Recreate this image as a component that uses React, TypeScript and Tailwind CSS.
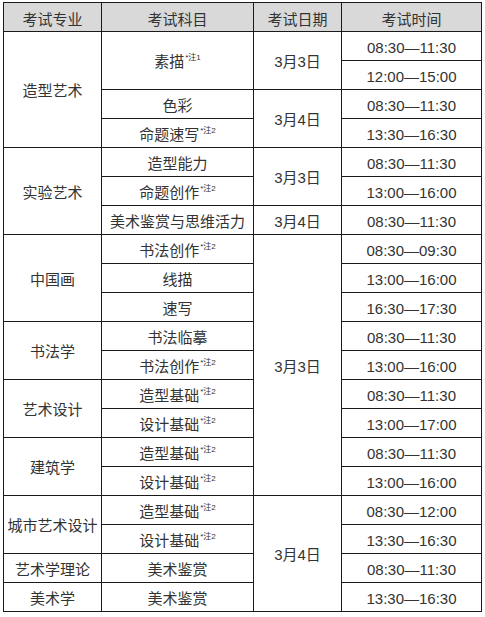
import React from "react";

type Cell = { t: string; rs?: number; note?: string };
type Row = Cell[];

const n2 = "*注2";

const rows: Row[] = [
  [{ t: "造型艺术", rs: 4 }, { t: "素描", rs: 2, note: "*注1" }, { t: "3月3日", rs: 2 }, { t: "08:30—11:30" }],
  [{ t: "12:00—15:00" }],
  [{ t: "色彩" }, { t: "3月4日", rs: 2 }, { t: "08:30—11:30" }],
  [{ t: "命题速写", note: n2 }, { t: "13:30—16:30" }],
  [{ t: "实验艺术", rs: 3 }, { t: "造型能力" }, { t: "3月3日", rs: 2 }, { t: "08:30—11:30" }],
  [{ t: "命题创作", note: n2 }, { t: "13:00—16:00" }],
  [{ t: "美术鉴赏与思维活力" }, { t: "3月4日" }, { t: "08:30—11:30" }],
  [{ t: "中国画", rs: 3 }, { t: "书法创作", note: n2 }, { t: "3月3日", rs: 9 }, { t: "08:30—09:30" }],
  [{ t: "线描" }, { t: "13:00—16:00" }],
  [{ t: "速写" }, { t: "16:30—17:30" }],
  [{ t: "书法学", rs: 2 }, { t: "书法临摹" }, { t: "08:30—11:30" }],
  [{ t: "书法创作", note: n2 }, { t: "13:00—16:00" }],
  [{ t: "艺术设计", rs: 2 }, { t: "造型基础", note: n2 }, { t: "08:30—11:30" }],
  [{ t: "设计基础", note: n2 }, { t: "13:00—17:00" }],
  [{ t: "建筑学", rs: 2 }, { t: "造型基础", note: n2 }, { t: "08:30—11:30" }],
  [{ t: "设计基础", note: n2 }, { t: "13:00—16:00" }],
  [{ t: "城市艺术设计", rs: 2 }, { t: "造型基础", note: n2 }, { t: "3月4日", rs: 4 }, { t: "08:30—12:00" }],
  [{ t: "设计基础", note: n2 }, { t: "13:30—16:30" }],
  [{ t: "艺术学理论" }, { t: "美术鉴赏" }, { t: "08:30—11:30" }],
  [{ t: "美术学" }, { t: "美术鉴赏" }, { t: "13:30—16:30" }],
];

const headers = ["考试专业", "考试科目", "考试日期", "考试时间"];

export default function App() {
  return (
    <div className="w-[485px] h-[617px] bg-white pt-[2px] pl-[3px]">
      <table
        className="table-fixed border-collapse border border-[#1a1a1a] text-[#333333] text-[15px] leading-none"
        style={{ width: 478 }}
      >
        <colgroup>
          <col className="w-[98px]" />
          <col className="w-[152px]" />
          <col className="w-[88px]" />
          <col className="w-[140px]" />
        </colgroup>
        <thead>
          <tr className="bg-[#d9d9d9]">
            {headers.map((h) => (
              <th
                key={h}
                className="h-[29px] p-0 pt-[2px] border border-[#1a1a1a] font-normal text-center align-middle [font-family:'Noto_Sans_CJK_SC',sans-serif]"
              >
                {h}
              </th>
            ))}
          </tr>
        </thead>
        <tbody>
          {rows.map((r, i) => (
            <tr key={i}>
              {r.map((c, j) => (
                <td
                  key={j}
                  rowSpan={c.rs}
                  className="h-[29px] p-0 pt-[2px] border border-[#1a1a1a] text-center align-middle whitespace-nowrap [font-family:'Liberation_Sans','Noto_Sans_CJK_SC',sans-serif]"
                >
                  {c.t}
                  {c.note && (
                    <sup className="text-[8px] relative -top-[7px] ml-[1px] [font-family:'Liberation_Sans','Noto_Sans_CJK_SC',sans-serif]">
                      {c.note}
                    </sup>
                  )}
                </td>
              ))}
            </tr>
          ))}
        </tbody>
      </table>
    </div>
  );
}
